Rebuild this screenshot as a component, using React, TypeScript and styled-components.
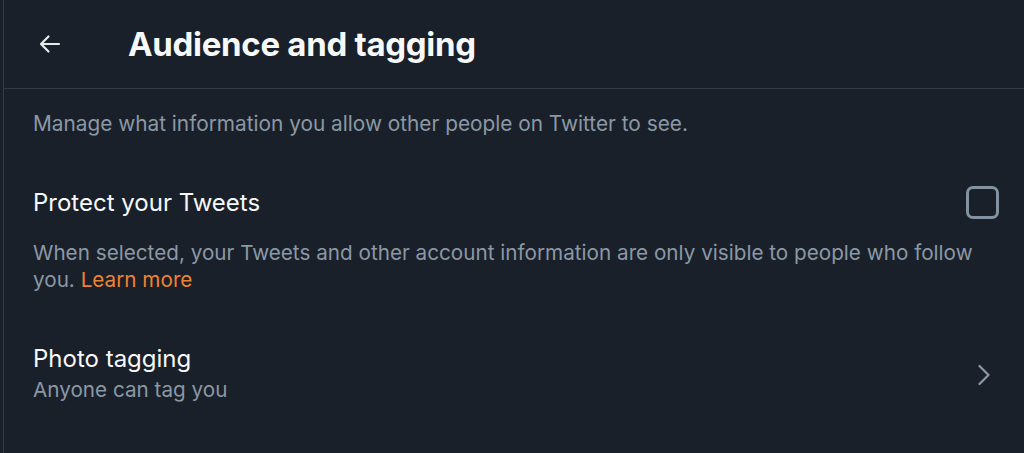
import React from 'react';
import styled, { createGlobalStyle } from 'styled-components';

const GlobalStyle = createGlobalStyle`
  html, body {
    margin: 0;
    padding: 0;
    background: #19202a;
  }
  body {
    font-family: Inter, "Noto Sans", sans-serif;
    -webkit-font-smoothing: antialiased;
  }
`;

const Page = styled.div`
  width: 1024px;
  height: 453px;
  overflow: hidden;
  background: #19202a;
  display: flex;
`;

const Rail = styled.div`
  width: 3px;
  flex-shrink: 0;
  border-right: 1px solid #323c47;
`;

const Panel = styled.main`
  flex: 1;
  display: flex;
  flex-direction: column;
`;

const Header = styled.header`
  height: 88px;
  display: flex;
  align-items: center;
  border-bottom: 1px solid #323c47;
  padding-left: 34px;
`;

const BackButton = styled.button`
  width: 24px;
  height: 24px;
  padding: 0;
  border: none;
  background: none;
  color: #e7e9ea;
  display: flex;
  align-items: center;
  justify-content: center;
  cursor: pointer;
  margin-right: 66px;
`;

const Title = styled.h1`
  margin: 0;
  font-size: 33px;
  font-weight: 700;
  color: #f7f9f9;
  letter-spacing: -0.3px;
`;

const Intro = styled.p`
  margin: 0;
  padding: 22px 29px 0;
  font-size: 20.8px;
  line-height: 26px;
  color: #8b98a5;
`;

const Section = styled.section<{ $top: number }>`
  padding: ${p => p.$top}px 25px 0 29px;
  display: flex;
  flex-direction: column;
`;

const Row = styled.div`
  display: flex;
  align-items: center;
  justify-content: space-between;
`;

const Label = styled.div`
  font-size: 24px;
  line-height: 30px;
  color: #f7f9f9;
`;

const Description = styled.p`
  margin: 20px 0 0;
  font-size: 20.7px;
  line-height: 27px;
  color: #8b98a5;
`;

const Sub = styled.div`
  font-size: 20.7px;
  line-height: 31px;
  color: #8b98a5;
`;

const LearnMore = styled.a`
  color: #f0812f;
  text-decoration: none;
`;

const Checkbox = styled.span`
  width: 27px;
  height: 27px;
  border: 3px solid #8392a0;
  border-radius: 7px;
  flex-shrink: 0;
`;

const Chevron = styled.span`
  color: #8b98a5;
  display: flex;
  margin-right: 8px;
`;

const App: React.FC = () => {
  return (
    <>
      <GlobalStyle />
      <Page>
        <Rail />
        <Panel>
          <Header>
            <BackButton aria-label="Back">
              <svg width="24" height="24" viewBox="0 0 24 24" fill="none">
                <path d="M21 12H3.5M10.5 4.5L3 12l7.5 7.5" stroke="currentColor" strokeWidth="2.2" strokeLinecap="round" strokeLinejoin="round" />
              </svg>
            </BackButton>
            <Title>Audience and tagging</Title>
          </Header>

          <Intro>Manage what information you allow other people on Twitter to see.</Intro>

          <Section $top={49}>
            <Row>
              <Label>Protect your Tweets</Label>
              <Checkbox />
            </Row>
            <Description>
              When selected, your Tweets and other account information are only visible to people who follow
              you. <LearnMore href="#">Learn more</LearnMore>
            </Description>
          </Section>

          <Section $top={51}>
            <Row>
              <div>
                <Label>Photo tagging</Label>
                <Sub>Anyone can tag you</Sub>
              </div>
              <Chevron>
                <svg width="14" height="22" viewBox="0 0 14 22" fill="none">
                  <path d="M2.5 2l9 9-9 9" stroke="currentColor" strokeWidth="2.2" strokeLinecap="round" strokeLinejoin="round" />
                </svg>
              </Chevron>
            </Row>
          </Section>
        </Panel>
      </Page>
    </>
  );
};

export default App;
